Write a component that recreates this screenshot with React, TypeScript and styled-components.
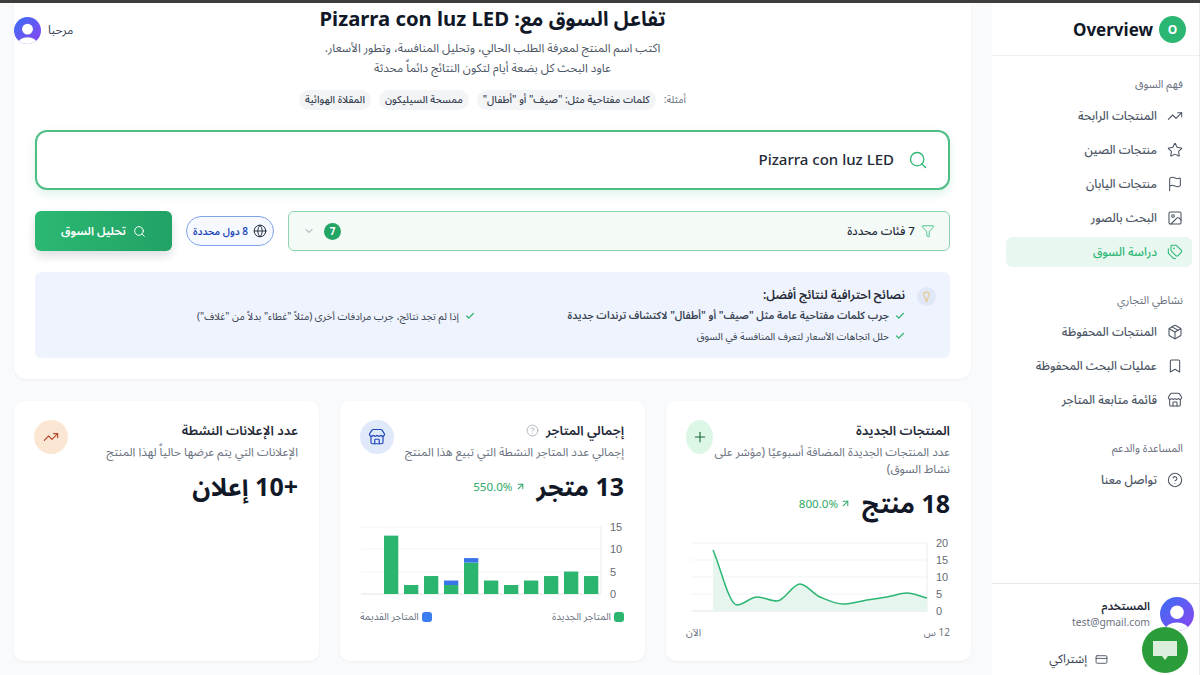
import React from "react";
import styled, { createGlobalStyle } from "styled-components";
import {
  ArrowUpRight,
  Bookmark,
  Check,
  ChevronDown,
  CircleHelp,
  CreditCard,
  Flag,
  Funnel,
  Globe,
  Image,
  Lightbulb,
  Package,
  Plus,
  Search,
  Star,
  Store,
  Tags,
  TrendingUp,
} from "lucide-react";

const GREEN = "#2bb673";

const navSections = [
  {
    label: "فهم السوق",
    items: [
      { icon: TrendingUp, text: "المنتجات الرابحة" },
      { icon: Star, text: "منتجات الصين" },
      { icon: Flag, text: "منتجات اليابان" },
      { icon: Image, text: "البحث بالصور" },
      { icon: Tags, text: "دراسة السوق", active: true },
    ],
  },
  {
    label: "نشاطي التجاري",
    items: [
      { icon: Package, text: "المنتجات المحفوظة" },
      { icon: Bookmark, text: "عمليات البحث المحفوظة" },
      { icon: Store, text: "قائمة متابعة المتاجر" },
    ],
  },
  {
    label: "المساعدة والدعم",
    items: [{ icon: CircleHelp, text: "تواصل معنا" }],
  },
];

const chips = [
  'كلمات مفتاحية مثل: "صيف" أو "أطفال"',
  "ممسحة السيليكون",
  "المقلاة الهوائية",
];

const linePoints: [number, number][] = [
  [27, 15],
  [51, 70],
  [71, 62],
  [91, 66],
  [114, 49],
  [134, 62],
  [157, 69],
  [181, 65],
  [201, 62],
  [221, 58],
  [241, 63],
];

// monotone curve, same idea as the chart lib: no overshoot past the points
function smoothPath(pts: [number, number][]) {
  const slopes = pts.slice(1).map((p, i) => (p[1] - pts[i][1]) / (p[0] - pts[i][0]));
  const tangents = pts.map((_, i) => {
    if (i === 0) return slopes[0];
    if (i === pts.length - 1) return slopes[i - 1];
    const a = slopes[i - 1];
    const b = slopes[i];
    return a * b <= 0 ? 0 : (2 * a * b) / (a + b);
  });
  let d = `M${pts[0][0]} ${pts[0][1]}`;
  for (let i = 0; i < pts.length - 1; i++) {
    const h = (pts[i + 1][0] - pts[i][0]) / 3;
    d += ` C${pts[i][0] + h} ${pts[i][1] + tangents[i] * h} ${pts[i + 1][0] - h} ${
      pts[i + 1][1] - tangents[i + 1] * h
    } ${pts[i + 1][0]} ${pts[i + 1][1]}`;
  }
  return d;
}

const barData = [
  [13, 0],
  [2, 0],
  [4, 0],
  [2, 1],
  [7, 1],
  [3, 0],
  [2, 0],
  [3, 0],
  [4, 0],
  [5, 0],
  [4, 0],
];

const Avatar = ({ id, size }: { id: string; size: number }) => (
  <svg width={size} height={size} viewBox="0 0 40 40">
    <defs>
      <linearGradient id={id} x1="0" y1="0" x2="1" y2="1">
        <stop offset="0" stopColor="#3b6ff5" />
        <stop offset="1" stopColor="#8b45f0" />
      </linearGradient>
      <clipPath id={`${id}-clip`}>
        <circle cx="20" cy="20" r="20" />
      </clipPath>
    </defs>
    <g clipPath={`url(#${id}-clip)`}>
      <rect width="40" height="40" fill={`url(#${id})`} />
      <circle cx="20" cy="18" r="8" fill="#fff" />
      <ellipse cx="20" cy="39" rx="14" ry="9" fill="#fff" />
    </g>
  </svg>
);

const LineChart = () => {
  const line = smoothPath(linePoints);
  return (
    <LineSvg width="264" height="84" viewBox="0 0 264 84">
      {[8, 25, 42, 59].map((y) => (
        <line key={y} x1="6" x2="241" y1={y} y2={y} stroke="#f1f3f5" />
      ))}
      <line x1="6" x2="241" y1="76" y2="76" stroke="#dfe3e8" />
      <line x1="241" x2="241" y1="8" y2="76" stroke="#e8ebef" />
      <path d={`${line} L241 76 L27 76 Z`} fill="#e6f6ee" />
      <path d={line} fill="none" stroke={GREEN} strokeWidth="1.5" />
      {[
        ["20", 8],
        ["15", 25],
        ["10", 42],
        ["5", 59],
        ["0", 76],
      ].map(([t, y]) => (
        <AxisText key={t} x="250" y={Number(y) + 4}>
          {t}
        </AxisText>
      ))}
    </LineSvg>
  );
};

const BarChart = () => (
  <BarSvg width="263" height="80" viewBox="0 0 263 80">
    {[7, 29, 52].map((y) => (
      <line key={y} x1="0" x2="240" y1={y} y2={y} stroke="#f3f4f6" />
    ))}
    <line x1="0" x2="240" y1="74" y2="74" stroke="#dfe3e8" />
    <line x1="240" x2="240" y1="7" y2="74" stroke="#e8ebef" />
    {barData.map(([fresh, old], i) => {
      const x = 23 + i * 20;
      const unit = 4.49;
      const freshH = fresh * unit;
      const oldH = old * unit;
      return (
        <g key={i}>
          <rect x={x} y={74 - freshH} width="14.3" height={freshH} fill="#2bb56f" />
          {old > 0 && (
            <rect x={x} y={74 - freshH - oldH} width="14.3" height={oldH} fill="#3b74e8" />
          )}
        </g>
      );
    })}
    {[
      ["15", 7],
      ["10", 29],
      ["5", 52],
      ["0", 74],
    ].map(([t, y]) => (
      <AxisText key={t} x="249" y={Number(y) + 4}>
        {t}
      </AxisText>
    ))}
  </BarSvg>
);

export default function App() {
  return (
    <>
      <GlobalStyle />
      <TopStrip />
      <Shell dir="rtl">
        <Sidebar>
          <Brand>
            <BrandBadge>O</BrandBadge>
            <BrandName>Overview</BrandName>
          </Brand>
          <Nav>
            {navSections.map((section) => (
              <NavSection key={section.label}>
                <NavLabel>{section.label}</NavLabel>
                {section.items.map((item) => (
                  <NavItem key={item.text} $active={item.active}>
                    <item.icon size={16} strokeWidth={1.6} />
                    <span>{item.text}</span>
                  </NavItem>
                ))}
              </NavSection>
            ))}
          </Nav>
          <Account>
            <AccountRow>
              <Avatar id="side-avatar" size={34} />
              <div>
                <AccountName>المستخدم</AccountName>
                <AccountMail>test@gmail.com</AccountMail>
              </div>
            </AccountRow>
            <SubscribeLink>
              <CreditCard size={13} strokeWidth={1.5} />
              <span>إشتراكي</span>
            </SubscribeLink>
          </Account>
        </Sidebar>

        <Main>
          <SearchPanel>
            <Title>تفاعل السوق مع: Pizarra con luz LED</Title>
            <Lead>
              اكتب اسم المنتج لمعرفة الطلب الحالي، وتحليل المنافسة، وتطور الأسعار.
              <br />
              عاود البحث كل بضعة أيام لتكون النتائج دائماً محدثة
            </Lead>
            <Examples>
              <ExamplesLabel>أمثلة:</ExamplesLabel>
              {chips.map((c) => (
                <Chip key={c}>{c}</Chip>
              ))}
            </Examples>
            <SearchBox>
              <Search size={20} strokeWidth={1.6} color={GREEN} />
              <SearchText>Pizarra con luz LED</SearchText>
            </SearchBox>
            <Controls>
              <FilterBox>
                <Funnel size={14} strokeWidth={1.4} color={GREEN} />
                <FilterText>7 فئات محددة</FilterText>
                <Count>7</Count>
                <ChevronDown size={12} strokeWidth={1.5} color="#6b7280" />
              </FilterBox>
              <CountryPill>
                <Globe size={14} strokeWidth={1.6} color="#1f2937" />
                <span>8 دول محددة</span>
              </CountryPill>
              <AnalyzeButton>
                <Search size={13} strokeWidth={1.8} />
                <span>تحليل السوق</span>
              </AnalyzeButton>
            </Controls>
            <Tips>
              <TipIcon>
                <Lightbulb size={11} strokeWidth={2} color="#eab84a" />
              </TipIcon>
              <TipBody>
                <TipHeading>نصائح احترافية لنتائج أفضل:</TipHeading>
                <TipGrid>
                  <Tip $strong>
                    <Check size={10} strokeWidth={3} color="#2fb36d" />
                    <span>جرب كلمات مفتاحية عامة مثل "صيف" أو "أطفال" لاكتشاف ترندات جديدة</span>
                  </Tip>
                  <Tip>
                    <Check size={10} strokeWidth={3} color="#2fb36d" />
                    <span>إذا لم تجد نتائج، جرب مرادفات أخرى (مثلاً "غطاء" بدلاً من "غلاف")</span>
                  </Tip>
                  <Tip>
                    <Check size={10} strokeWidth={3} color="#2fb36d" />
                    <span>حلل اتجاهات الأسعار لتعرف المنافسة في السوق</span>
                  </Tip>
                </TipGrid>
              </TipBody>
            </Tips>
          </SearchPanel>

          <Stats>
            <StatCard>
              <StatHead>
                <StatCopy>
                  <StatTitle>المنتجات الجديدة</StatTitle>
                  <StatDesc>عدد المنتجات الجديدة المضافة أسبوعيًا (مؤشر على نشاط السوق)</StatDesc>
                </StatCopy>
                <StatIcon $bg="#dcf7e6" $color="#166534" $narrow>
                  <Plus size={16} strokeWidth={1.6} />
                </StatIcon>
              </StatHead>
              <ValueRow>
                <Value>18 منتج</Value>
                <Growth>
                  <ArrowUpRight size={11} strokeWidth={2.2} />
                  <span dir="ltr">800.0%</span>
                </Growth>
              </ValueRow>
              <LineChart />
              <AxisRow>
                <span>12 س</span>
                <span>الآن</span>
              </AxisRow>
            </StatCard>

            <StatCard>
              <StatHead>
                <StatCopy>
                  <StatTitle>
                    إجمالي المتاجر
                    <CircleHelp size={13} strokeWidth={1.4} color="#9ca3af" />
                  </StatTitle>
                  <StatDesc>إجمالي عدد المتاجر النشطة التي تبيع هذا المنتج</StatDesc>
                </StatCopy>
                <StatIcon $bg="#dfe9fa" $color="#2348b8">
                  <Store size={18} strokeWidth={1.6} />
                </StatIcon>
              </StatHead>
              <ValueRow>
                <Value>13 متجر</Value>
                <Growth>
                  <ArrowUpRight size={11} strokeWidth={2.2} />
                  <span dir="ltr">550.0%</span>
                </Growth>
              </ValueRow>
              <BarChart />
              <Legend>
                <LegendItem $color="#2bb56f">المتاجر الجديدة</LegendItem>
                <LegendItem $color="#3b7cf0">المتاجر القديمة</LegendItem>
              </Legend>
            </StatCard>

            <StatCard>
              <StatHead>
                <StatCopy>
                  <StatTitle>عدد الإعلانات النشطة</StatTitle>
                  <StatDesc>الإعلانات التي يتم عرضها حالياً لهذا المنتج</StatDesc>
                </StatCopy>
                <StatIcon $bg="#fbe6d3" $color="#b4472b">
                  <TrendingUp size={16} strokeWidth={1.7} />
                </StatIcon>
              </StatHead>
              <ValueRow>
                <Value>+10 إعلان</Value>
              </ValueRow>
            </StatCard>
          </Stats>
        </Main>
      </Shell>

      <Greeting>
        <Avatar id="top-avatar" size={27} />
        <span>مرحبا</span>
      </Greeting>

      <ChatBubble>
        <svg width="26" height="24" viewBox="0 0 26 24">
          <path d="M1 3h24v15H16l-3 4-3-4H1z" fill="#dcefdc" />
        </svg>
      </ChatBubble>
    </>
  );
}

const GlobalStyle = createGlobalStyle`
  html, body {
    margin: 0;
    height: 100%;
    overflow: hidden;
    background: #f8fafc;
  }
  body {
    font-family: "Noto Sans", "Noto Sans Arabic", "DejaVu Sans", sans-serif;
    color: #111827;
  }
  * { box-sizing: border-box; }
`;

const TopStrip = styled.div`
  height: 3px;
  background: #3d3d3d;
`;

const Shell = styled.div`
  display: flex;
  height: 672px;
`;

const Sidebar = styled.aside`
  width: 208px;
  flex-shrink: 0;
  display: flex;
  flex-direction: column;
  background: #fff;
  border-right: 1px solid #e9ebee;
`;

const Brand = styled.div`
  height: 53px;
  display: flex;
  align-items: center;
  gap: 6px;
  padding: 0 13px;
  border-bottom: 1px solid #eef0f2;
`;

const BrandBadge = styled.div`
  width: 27px;
  height: 27px;
  border-radius: 50%;
  background: ${GREEN};
  color: #fff;
  font-size: 12px;
  font-weight: 700;
  display: flex;
  align-items: center;
  justify-content: center;
`;

const BrandName = styled.div`
  font-size: 17px;
  font-weight: 700;
  color: #111827;
`;

const Nav = styled.nav`
  flex: 1;
  padding: 20px 7px 0 14px;
  display: flex;
  flex-direction: column;
  gap: 25px;
`;

const NavSection = styled.div`
  display: flex;
  flex-direction: column;
  gap: 4px;
`;

const NavLabel = styled.div`
  height: 16px;
  margin-bottom: 5px;
  padding-right: 9px;
  font-size: 11px;
  line-height: 16px;
  color: #6b7280;
`;

const NavItem = styled.a<{ $active?: boolean }>`
  height: 30px;
  display: flex;
  align-items: center;
  gap: 10px;
  padding: 0 9px;
  border-radius: 6px;
  font-size: 11.9px;
  font-weight: 500;
  color: ${(p) => (p.$active ? GREEN : "#4b5563")};
  background: ${(p) => (p.$active ? "#e8f8f0" : "transparent")};
`;

const Account = styled.div`
  height: 92px;
  border-top: 1px solid #e5e7eb;
  padding: 13px 5px 0 0;
`;

const AccountRow = styled.div`
  display: flex;
  align-items: center;
  gap: 10px;
`;

const AccountName = styled.div`
  font-size: 11.5px;
  font-weight: 600;
  line-height: 16px;
  color: #1f2937;
`;

const AccountMail = styled.div`
  font-size: 10.3px;
  line-height: 16px;
  color: #6b7280;
`;

const SubscribeLink = styled.div`
  display: flex;
  align-items: center;
  gap: 8px;
  margin: 16px 86px 0 0;
  font-size: 12px;
  color: #374151;
`;

const Main = styled.main`
  flex: 1;
  min-width: 0;
  padding: 0 21px 0 14px;
`;

const SearchPanel = styled.section`
  height: 376px;
  padding: 3px 21px 0;
  background: #fff;
  border-radius: 0 0 12px 12px;
  box-shadow: 0 1px 3px rgba(17, 24, 39, 0.05);
  text-align: center;
`;

const Title = styled.h1`
  margin: 0;
  font-size: 20.3px;
  line-height: 24px;
  font-weight: 700;
  color: #111827;
`;

const Lead = styled.p`
  margin: 7px 0 0;
  font-size: 11.8px;
  line-height: 20px;
  color: #4b5563;
`;

const Examples = styled.div`
  margin-top: 12px;
  display: flex;
  justify-content: center;
  align-items: center;
  gap: 8px;
`;

const ExamplesLabel = styled.span`
  font-size: 10.2px;
  color: #6b7280;
`;

const Chip = styled.span`
  height: 20px;
  padding: 0 6px;
  display: flex;
  align-items: center;
  border-radius: 10px;
  background: #f3f4f6;
  font-size: 10.2px;
  font-weight: 500;
  color: #374151;
`;

const SearchBox = styled.div`
  height: 60px;
  margin-top: 19px;
  padding: 0 20px 0 14px;
  display: flex;
  align-items: center;
  gap: 14px;
  background: #fff;
  border: 2px solid #4fbd86;
  border-radius: 12px;
  box-shadow: 0 4px 10px rgba(43, 182, 115, 0.16);
`;

const SearchText = styled.span`
  padding-bottom: 2px;
  font-size: 15px;
  font-weight: 500;
  color: #1f2937;
`;

const Controls = styled.div`
  margin-top: 21px;
  display: flex;
  align-items: center;
  gap: 14px;
`;

const FilterBox = styled.div`
  flex: 1;
  height: 40px;
  padding: 0 14px;
  display: flex;
  align-items: center;
  gap: 6px;
  background: #f4fbf7;
  border: 1px solid #8fd4b0;
  border-radius: 6px;
`;

const FilterText = styled.span`
  flex: 1;
  text-align: right;
  font-size: 11.6px;
  font-weight: 500;
  color: #1f2937;
`;

const Count = styled.span`
  width: 17px;
  height: 17px;
  margin-left: 3px;
  border-radius: 50%;
  background: #22a565;
  color: #fff;
  font-size: 10px;
  font-weight: 700;
  display: flex;
  align-items: center;
  justify-content: center;
`;

const CountryPill = styled.div`
  width: 88px;
  height: 30px;
  display: flex;
  align-items: center;
  justify-content: center;
  gap: 5px;
  background: #f6f9ff;
  border: 1px solid #7fa3ea;
  border-radius: 15px;
  font-size: 10px;
  font-weight: 600;
  color: #2348b8;
`;

const AnalyzeButton = styled.button`
  width: 137px;
  height: 40px;
  display: flex;
  align-items: center;
  justify-content: center;
  gap: 7px;
  border: 0;
  border-radius: 6px;
  background: linear-gradient(90deg, #2cb872, #21a266);
  box-shadow: 0 5px 10px rgba(17, 24, 39, 0.14);
  color: #fff;
  font-family: inherit;
  font-size: 11.7px;
  font-weight: 600;
`;

const Tips = styled.div`
  height: 86px;
  margin-top: 21px;
  padding: 15px 14px;
  display: flex;
  gap: 12px;
  background: #eef3fd;
  border-radius: 6px;
  text-align: right;
`;

const TipIcon = styled.div`
  width: 19px;
  height: 19px;
  flex-shrink: 0;
  border-radius: 50%;
  background: #e0e8f8;
  display: flex;
  align-items: center;
  justify-content: center;
`;

const TipBody = styled.div`
  flex: 1;
`;

const TipHeading = styled.div`
  font-size: 12px;
  line-height: 16px;
  font-weight: 600;
  color: #1f2937;
`;

const TipGrid = styled.div`
  margin-top: 5px;
  display: grid;
  grid-template-columns: 1fr 1fr;
  column-gap: 4px;
  row-gap: 4px;
`;

const Tip = styled.div<{ $strong?: boolean }>`
  height: 16px;
  display: flex;
  align-items: center;
  gap: 6px;
  font-size: ${(p) => (p.$strong ? "10.4px" : "10.1px")};
  font-weight: ${(p) => (p.$strong ? 600 : 400)};
  color: #374151;
`;

const Stats = styled.div`
  margin-top: 22px;
  display: grid;
  grid-template-columns: repeat(3, 1fr);
  gap: 21px;
`;

const StatCard = styled.article`
  height: 260px;
  padding: 19px 21px 0 20px;
  background: #fff;
  border-radius: 10px;
  box-shadow: 0 1px 3px rgba(17, 24, 39, 0.05);
`;

const StatHead = styled.div`
  display: flex;
  justify-content: space-between;
  align-items: flex-start;
`;

const StatCopy = styled.div`
  flex: 1;
`;

const StatTitle = styled.h3`
  margin: 0;
  display: flex;
  align-items: center;
  gap: 7px;
  font-size: 13px;
  line-height: 20px;
  font-weight: 600;
  color: #1f2937;
`;

const StatDesc = styled.p`
  margin: 3px 0 0;
  font-size: 11.8px;
  line-height: 17px;
  color: #6b7280;
`;

const StatIcon = styled.div<{ $bg: string; $color: string; $narrow?: boolean }>`
  width: ${(p) => (p.$narrow ? "27px" : "34px")};
  height: 34px;
  flex-shrink: 0;
  border-radius: 50%;
  background: ${(p) => p.$bg};
  color: ${(p) => p.$color};
  display: flex;
  align-items: center;
  justify-content: center;
`;

const ValueRow = styled.div`
  margin-top: 9px;
  display: flex;
  align-items: center;
  gap: 11px;
`;

const Value = styled.div`
  font-size: 25px;
  line-height: 34px;
  font-weight: 700;
  color: #111827;
`;

const Growth = styled.div`
  display: flex;
  align-items: center;
  gap: 2px;
  font-size: 11.6px;
  color: #2fa866;
`;

const LineSvg = styled.svg`
  display: block;
  margin-top: 15px;
  direction: ltr;
`;

const BarSvg = styled(LineSvg)`
  margin-top: 17px;
`;

const AxisText = styled.text`
  font-family: "Liberation Sans", sans-serif;
  font-size: 11px;
  fill: #666b73;
`;

const AxisRow = styled.div`
  margin-top: 3px;
  display: flex;
  justify-content: space-between;
  font-size: 10px;
  color: #6b7280;
`;

const Legend = styled.div`
  margin-top: 6px;
  display: flex;
  justify-content: space-between;
  font-size: 10px;
  color: #6b7280;
`;

const LegendItem = styled.span<{ $color: string }>`
  display: flex;
  align-items: center;
  gap: 3px;

  &::before {
    content: "";
    width: 10px;
    height: 10px;
    border-radius: 3px;
    background: ${(p) => p.$color};
  }
`;

const Greeting = styled.div`
  position: absolute;
  top: 17px;
  left: 14px;
  display: flex;
  align-items: center;
  gap: 7px;
  font-size: 12px;
  color: #374151;
`;

const ChatBubble = styled.div`
  position: absolute;
  left: 1142px;
  top: 627px;
  width: 46px;
  height: 46px;
  border-radius: 50%;
  background: #2a9d3a;
  display: flex;
  align-items: center;
  justify-content: center;
`;
